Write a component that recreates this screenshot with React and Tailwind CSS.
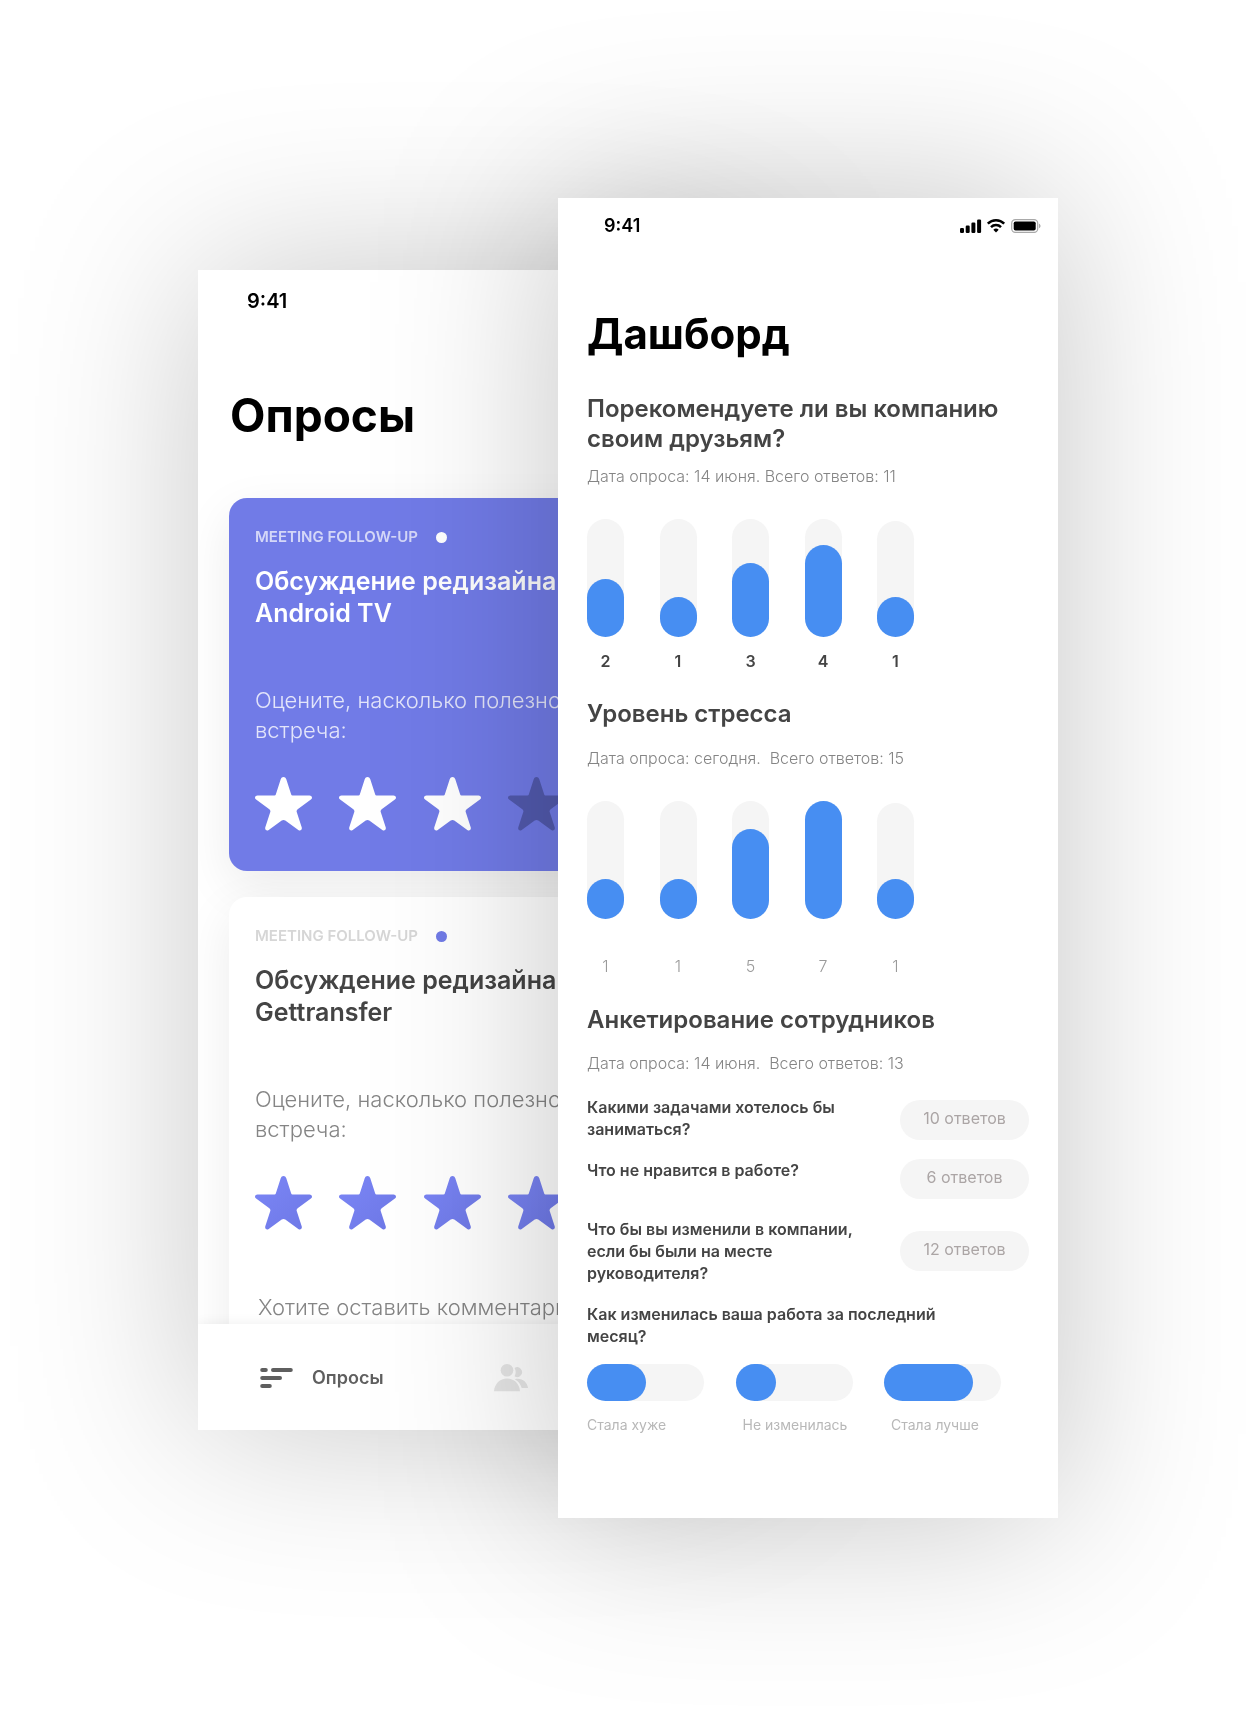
const STAR =
  "M28.5 0c1.3 0 2.2.8 2.7 2l5 15.6c.2.6.6.9 1.3.9h17c2.5 0 3.4 2.6 1.4 4.1L43 32c-1.3 1-1.7 1.8-1.2 3.2l4.9 15c.7 2.4-1.3 4.1-3.4 2.7L30.3 43.6c-1.2-.8-2.4-.8-3.6 0L13.7 52.9c-2.1 1.4-4.1-.3-3.4-2.7l4.9-15c.5-1.4.1-2.2-1.2-3.2L1.1 22.6c-2-1.5-1.1-4.1 1.4-4.1h17c.7 0 1.1-.3 1.3-.9l5-15.6c.5-1.2 1.4-2 2.7-2z";

function Rating({ fills }) {
  return (
    <div className="mt-8 flex w-[394px] justify-between">
      {fills.map((fill, i) => (
        <button key={i} type="button" aria-label={`Оценка ${i + 1}`} className="shrink-0">
          <svg width="57" height="54" viewBox="0 0 57 54" className="block">
            <path d={STAR} fill={fill} />
          </svg>
        </button>
      ))}
    </div>
  );
}

function SurveyCard({ className, tagClass, dotClass, textClass, title, fills, children }) {
  return (
    <article
      className={`rounded-[18px] px-[26px] pt-[29px] pb-10 shadow-[0_16px_50px_rgba(0,0,0,0.08)] ${className}`}
    >
      <div className="flex items-center gap-[18px]">
        <span className={`text-[15px] leading-5 font-semibold ${tagClass}`}>MEETING FOLLOW-UP</span>
        <span className={`size-[11px] rounded-full ${dotClass}`} />
      </div>
      <h2 className="mt-[18px] text-[25px] leading-8 font-semibold">
        Обсуждение редизайна
        <br />
        {title}
      </h2>
      <p className={`mt-14 text-[22px] leading-[30px] font-light ${textClass}`}>
        Оцените, насколько полезной
        <br />
        встреча:
      </p>
      <Rating fills={fills} />
      {children}
    </article>
  );
}

function SurveysScreen() {
  return (
    <section className="mt-[72px] -mr-[180px] flex h-[1160px] w-[540px] shrink-0 flex-col overflow-hidden bg-white drop-shadow-[0_0_90px_rgba(0,0,0,0.22)]">
      <div className="flex h-[62px] shrink-0 items-center px-[49px] text-xl font-semibold text-black">
        9:41
      </div>
      <h1 className="mt-[53px] shrink-0 px-8 text-[46px] leading-[60px] font-bold text-black">Опросы</h1>
      <div className="-mt-12 flex min-h-0 flex-1 flex-col gap-[26px] overflow-hidden px-[31px] pt-[101px]">
        <SurveyCard
          className="bg-[#717be7] text-white"
          tagClass="text-white/70"
          dotClass="bg-white"
          textClass="text-white/80"
          title="Android TV"
          fills={["#fff", "#fff", "#fff", "#525aae", "#525aae"]}
        />
        <SurveyCard
          className="bg-white text-[#444]"
          tagClass="text-[#d6d6d6]"
          dotClass="bg-[#717be7]"
          textClass="text-[#858585]"
          title="Gettransfer"
          fills={["url(#star)", "url(#star)", "url(#star)", "url(#star)", "url(#star)"]}
        >
          <p className="mt-[62px] pl-[3px] text-[22px] leading-[30px] font-light text-[#858585]">
            Хотите оставить комментарий?
          </p>
        </SurveyCard>
      </div>
      <nav className="z-10 flex h-[106px] shrink-0 items-center bg-white pt-0.5 pr-8 pl-[62px] shadow-[0_0_12px_rgba(0,0,0,0.07)]">
        <button type="button" className="flex items-center gap-[19px] text-lg font-semibold text-[#5f5f5f]">
          <svg
            width="33"
            height="20"
            viewBox="0 0 33 20"
            fill="none"
            stroke="currentColor"
            strokeWidth="4"
            strokeLinecap="round"
          >
            <path d="M2.2 2h3.6M13 2h17.8M2.2 10h17.8M2.2 18h7.6" />
          </svg>
          Опросы
        </button>
        <button type="button" aria-label="Сотрудники" className="ml-[110px] text-[#e6e6e6]">
          <svg width="34" height="28" viewBox="0 0 34 28" fill="currentColor">
            <circle cx="13" cy="6.3" r="6.3" />
            <path d="M20.6 3.9a4.9 4.9 0 1 1 0 8.4 9 9 0 0 0 0-8.4z" />
            <path d="M0 27.3C.4 20 6 14.6 13 14.6S25.6 20 26 27.3z" />
            <path d="M20.8 15.2C27.5 13.6 33.2 17.7 34 24.1h-6.3c-1-3.9-3.2-6.8-6.9-8.9z" />
          </svg>
        </button>
      </nav>
      <svg width="0" height="0" className="absolute" aria-hidden="true">
        <linearGradient id="star" x1="0" y1="0" x2="1" y2="1">
          <stop offset="0" stopColor="#7b86f6" />
          <stop offset="1" stopColor="#6e78e6" />
        </linearGradient>
      </svg>
    </section>
  );
}

function StatusIcons() {
  return (
    <svg width="81" height="14" viewBox="0 0 81 14" aria-hidden="true">
      <rect x="0" y="9" width="4" height="5" rx="1.2" />
      <rect x="5.7" y="6.5" width="4" height="7.5" rx="1.2" />
      <rect x="11.4" y="3.5" width="4" height="10.5" rx="1.2" />
      <rect x="17.1" y="0.5" width="4" height="13.5" rx="1.2" />
      <g fill="none" stroke="#000" strokeWidth="2.5">
        <path d="M27.8 4.7a11.5 11.5 0 0 1 16.4 0" />
        <path d="M31 8.1a7.1 7.1 0 0 1 10 0" />
      </g>
      <path d="M36 13.5l-2.7-2.7a3.9 3.9 0 0 1 5.4 0z" />
      <rect x="51.7" y="0.6" width="26" height="12.8" rx="3.6" fill="none" stroke="#a9a9a9" strokeWidth="1.2" />
      <rect x="53.7" y="2.5" width="22" height="9" rx="1.8" />
      <path d="M79 4.8c2 .7 2 3.7 0 4.4z" fill="#a9a9a9" />
    </svg>
  );
}

function BarChart({ label, data, valuesClass }) {
  return (
    <div role="group" aria-label={label} className="mt-[31px] flex w-[327px] justify-between">
      {data.map(({ value, height, track }, i) => (
        <div key={i} className="flex w-[37px] flex-col items-center">
          <div className="flex h-[118px] w-full items-end">
            <div className="flex w-full items-end rounded-full bg-[#f5f5f5]" style={{ height: track }}>
              <div className="w-full rounded-full bg-[#478ef2]" style={{ height }} />
            </div>
          </div>
          <span className={`text-base leading-6 ${valuesClass}`}>{value}</span>
        </div>
      ))}
    </div>
  );
}

const RECOMMEND = [
  { value: 2, height: 58, track: 118 },
  { value: 1, height: 40, track: 118 },
  { value: 3, height: 74, track: 118 },
  { value: 4, height: 92, track: 118 },
  { value: 1, height: 40, track: 116 },
];

const STRESS = [
  { value: 1, height: 40, track: 118 },
  { value: 1, height: 40, track: 118 },
  { value: 5, height: 90, track: 118 },
  { value: 7, height: 118, track: 118 },
  { value: 1, height: 40, track: 116 },
];

function Question({ text, answers, align }) {
  return (
    <div className={`flex justify-between ${align}`}>
      <h3 className="max-w-[285px] text-base leading-[22px] font-semibold">{text}</h3>
      <button
        type="button"
        className="h-10 w-[129px] shrink-0 rounded-full bg-[#f5f5f5] pb-1 text-base text-[#aba5a5]"
      >
        {answers}
      </button>
    </div>
  );
}

function Meter({ label, width, labelClass }) {
  return (
    <div className="w-[117px]">
      <div className="h-[37px] rounded-full bg-[#f5f5f5]">
        <div className="h-full rounded-full bg-[#478ef2]" style={{ width }} />
      </div>
      <p className={`mt-[14px] text-sm leading-5 whitespace-nowrap text-[#b8b8b8] ${labelClass}`}>{label}</p>
    </div>
  );
}

const META = "text-base leading-6 font-light text-[#858585] whitespace-pre";
const HEADING = "text-2xl leading-[30px] font-semibold";

function DashboardScreen() {
  return (
    <section className="z-10 w-[500px] shrink-0 bg-white pb-[83px] text-[#444] drop-shadow-[0_0_90px_rgba(0,0,0,0.23)]">
      <div className="flex h-14 items-center justify-between pr-[17px] pl-[46px] text-lg font-semibold text-black">
        9:41
        <StatusIcons />
      </div>
      <div className="px-[29px]">
        <h1 className="mt-[52px] text-[42px] leading-[56px] font-bold text-black">Дашборд</h1>

        <h2 className={`mt-8 ${HEADING}`}>Порекомендуете ли вы компанию своим друзьям?</h2>
        <p className={`mt-[10px] ${META}`}>Дата опроса: 14 июня. Всего ответов: 11</p>
        <BarChart label="Рекомендации" data={RECOMMEND} valuesClass="mt-3 font-semibold" />

        <h2 className={`mt-[26px] ${HEADING}`}>Уровень стресса</h2>
        <p className={`mt-[17px] ${META}`}>{"Дата опроса: сегодня.  Всего ответов: 15"}</p>
        <BarChart label="Стресс" data={STRESS} valuesClass="mt-[35px] font-light text-[#9a9a9a]" />

        <h2 className={`mt-[27px] ${HEADING}`}>Анкетирование сотрудников</h2>
        <p className={`mt-4 ${META}`}>{"Дата опроса: 14 июня.  Всего ответов: 13"}</p>

        <div className="mt-[21px] flex flex-col gap-[19px]">
          <Question text="Какими задачами хотелось бы заниматься?" answers="10 ответов" align="items-end" />
          <Question text="Что не нравится в работе?" answers="6 ответов" align="items-start" />
          <Question
            text="Что бы вы изменили в компании, если бы были на месте руководителя?"
            answers="12 ответов"
            align="items-center"
          />
          <h3 className="max-w-[380px] text-base leading-[22px] font-semibold">
            Как изменилась ваша работа за последний месяц?
          </h3>
        </div>
        <div className="mt-[17px] flex w-[414px] justify-between">
          <Meter label="Стала хуже" width={59} labelClass="" />
          <Meter label="Не изменилась" width={40} labelClass="pl-[7px]" />
          <Meter label="Стала лучше" width={89} labelClass="pl-[7px]" />
        </div>
      </div>
    </section>
  );
}

export default function App() {
  return (
    <main className="flex min-h-screen items-start justify-center overflow-hidden bg-white py-[198px] font-['Inter',sans-serif]">
      <SurveysScreen />
      <DashboardScreen />
    </main>
  );
}
